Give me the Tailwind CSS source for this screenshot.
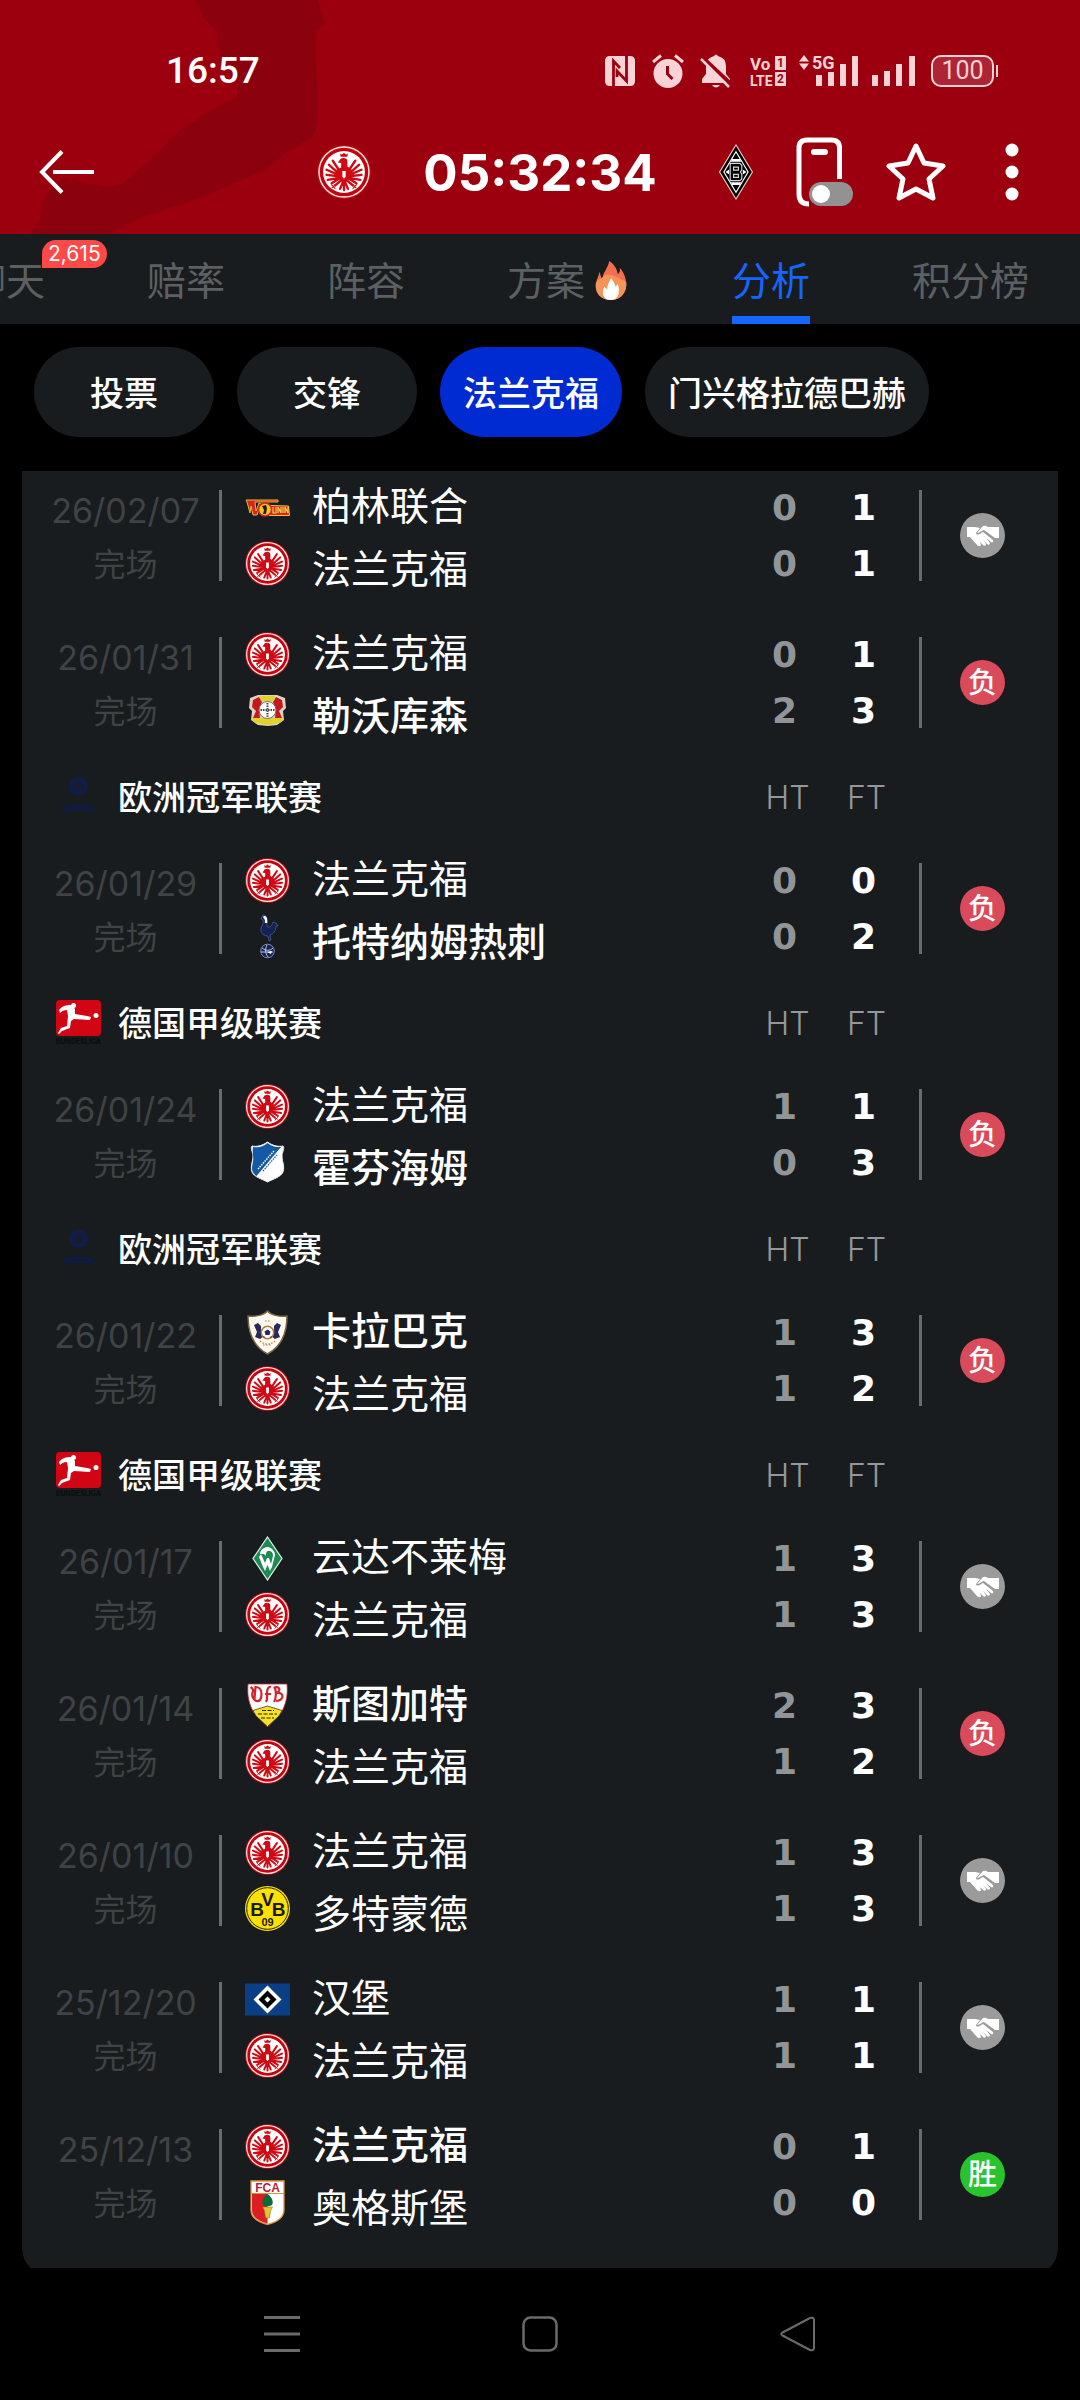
<!DOCTYPE html>
<html lang="zh-CN">
  <head>
    <meta charset="UTF-8" />
    <meta name="viewport" content="width=device-width, initial-scale=1.0" />
    <title>法兰克福 - 分析</title>
    <script src="https://cdn.jsdelivr.net/npm/@tailwindcss/browser@4"></script>
  </head>
  <body class="flex min-h-screen flex-col overflow-x-hidden bg-black font-['Inter','Noto_Sans_CJK_SC',sans-serif] text-white">
    <!-- Club and league logos -->
    <svg class="hidden">
      <symbol id="sge" viewBox="0 0 48 48">
        <circle cx="24" cy="24" r="24" fill="#c20510" />
        <circle cx="24" cy="24" r="22.2" fill="none" stroke="#fbe9e4" stroke-width="1.3" />
        <circle cx="24" cy="24" r="18.6" fill="#fff" />
        <g fill="none" stroke="#cf0a14" stroke-linecap="round" stroke-width="2.1">
          <path d="M22 26 14 14M21 27 10.500 17.500M21 27.500 8.500 22M21 28 8.500 26.500M21 29 9.500 31M21 29 13 34" />
          <path d="M26 26 34 14M27 27 37.500 17.500M27 27.500 39.500 22M27 28 39.500 26.500M27 29 38.500 31M27 29 35 34" />
          <path d="M22 31 16 36M26 31 32 36M24 32V40M23 33 20.500 39M25 33 27.500 39" />
          <path stroke-width="1" d="M13 35.500 16 38.500M13.500 38 16 35.500M35 35.500 32 38.500M34.500 38 32 35.500" />
        </g>
        <path fill="#cf0a14" d="M20.500 7.500 22 8.500 24 7 26 8.500 27.500 7.500 27 10.500H21zM20 13.500C21 11 26.500 10.500 27 14V19L31 22 28 31 24 34 20 31 17 22 21.500 20V16L18.500 15.500z" />
        <path fill="#fff" d="M22.500 23h3v5l-1.500 2-1.500-2z" />
      </symbol>
      <symbol id="bmg" viewBox="0 0 36 58">
        <path fill="#000" stroke="#e9c9c6" stroke-width="1.2" d="M18 1 35 29 18 57 1 29z" />
        <path fill="none" stroke="#fff" stroke-width="1.2" d="M18 8 30.500 29 18 50 5.500 29z" />
        <path fill="#fff" d="M14 15.500h8l1.500 3h-11zM14 42.500h8l1.500-3h-11zM7 29l4-2.500v5zM29 29l-4-2.500v5z" />
        <path fill="none" stroke="#d7d7d7" stroke-width="1.200" d="M12 20h10l2 2v5l-1.500 2 1.500 2v5l-2 2H12zM15.500 24h5v3h-5zM15.500 31.500h5v3h-5z" />
      </symbol>
      <symbol id="union" viewBox="0 0 45 45">
        <path fill="#d8261c" stroke="#e9b93a" stroke-width="1" d="M1 15h32v2H10l1 9 3-8 2 1-4 11H8L6 21 5 28 2 17z" />
        <path fill="#d8261c" stroke="#ebc43c" stroke-width="1" d="M25 20.500 43.500 21 44.500 30.500H24z" />
        <path fill="none" stroke="#f4d24a" stroke-width="1.200" d="M28 22v6h3v-6M33 28v-6l3 6v-6M38 22v6M40 28v-6l3 6v-6" />
        <circle cx="20" cy="24.500" r="6.500" fill="#efc52e" stroke="#d8261c" stroke-width="1.500" />
        <path fill="#2e1b10" d="M17 21l4-1 1 3-1 6h-3l1-4z" />
      </symbol>
      <symbol id="b04" viewBox="0 0 45 45">
        <path fill="#d9d5c0" d="M5 10 13 7h19l8 3 1 10-3 3 1 9-7 5-9 1-10-1-7-5 1-9-3-3z" />
        <path fill="#c8171d" d="M8 12l6-3 3 5-3 8 1 8H8l3-7-4-4zM37 12l-6-3-3 5 3 8-1 8h7l-3-7 4-4z" />
        <path fill="#e3d22c" d="M15 8h15l-1 5H16zM6 30h33l-4 5-12 2-13-2z" />
        <circle cx="22.500" cy="22" r="8.500" fill="#fff" stroke="#6d6a60" />
        <path fill="none" stroke="#444" stroke-width="2" stroke-dasharray="1.500 1" d="M15.500 22h14M22.500 15v14" />
      </symbol>
      <symbol id="thfc" viewBox="0 0 45 45">
        <path fill="#132257" stroke="#4a5a92" stroke-width=".8" d="M18 1c3 0 4 2 4 5v6c2 3 5 0 6-4l3 1 2 3-2 0c0 5-3 8-6 9l1 5-2 1-1-5c-4 0-8-3-7-8 1-3 3-4 2-8l-2-1z" />
        <path fill="#fff" d="M18.500 2c3-.5 4 2 3.800 7h-2.500c.5-3 0-4-1.500-5z" />
        <circle cx="22.500" cy="37" r="6.800" fill="#132257" stroke="#8c97bd" stroke-width=".9" />
        <path fill="none" stroke="#d5d9ea" stroke-width=".9" d="M17 34c4 3 8 3 11 0M16 38h12M22 31c-2 4-2 8 1 12" />
        <path fill="#fff" d="M22 38l5-1-1 3z" />
      </symbol>
      <symbol id="tsg" viewBox="0 0 45 45">
        <path fill="#fff" stroke="#e8eef5" d="M7 6c4 1 10 0 15.500-4C28 6 34 7 38 6c2 3-1 6-1 10 0 6 3 10 1 16-2 5-10 7-15.500 10C17 39 9 37 7 32c-2-6 1-10 1-16 0-4-3-7-1-10z" />
        <path fill="#1459a5" d="M8 7c5 1 10 0 14.500-4C27 6.500 32 7.500 36 7L11.500 36C6 32 6.500 28 8 22c1-6-1-10 0-15z" />
        <path fill="none" stroke="#fff" stroke-width="1.500" stroke-dasharray="1.500 1" d="M13 29 29 11" />
        <path fill="none" stroke="#1459a5" stroke-width="1.200" stroke-dasharray="1.500 1" d="M18 31 32 15" />
      </symbol>
      <symbol id="qar" viewBox="0 0 45 45">
        <path fill="#fdf9ef" stroke="#7b6444" stroke-width="1.500" d="M22.500 1C26 5 34 7 42 6c0 14-3 29-19.500 38C6 35 3 20 3 6c8 1 16-1 19.500-5z" />
        <path fill="#28285c" d="M9 15l4-2 3 3v6l3 4-4 3-5-2 2-5zM36 15l-4-2-3 3v6l-3 4 4 3 5-2-2-5z" />
        <circle cx="22.500" cy="22.500" r="6.200" fill="#fff" stroke="#b3803f" stroke-width="1.500" />
        <path fill="#28285c" d="M22.500 19.500l3 2-1 3.500h-4l-1-3.500zM18 26l2 1-1 1zM27 26l-2 1 1 1z" />
        <path fill="none" stroke="#b3803f" stroke-width="1.200" stroke-dasharray="1.500 1.500" d="M20 11h5M15 31c4 4 11 4 15 0M18 35h9" />
      </symbol>
      <symbol id="svw" viewBox="0 0 45 45">
        <path fill="#1d8a52" stroke="#e8f3ec" stroke-width="1.200" d="M22.500 1 37 22.500 22.500 44 8 22.500z" />
        <path fill="#fff" d="M15 18c0-4 4-7 8-7 4 1 7 4 7 8l-3 12-2 4-2.500-6-2.500 6-2-4-4-10 2-3 4 9 2-5h2l2 6 2-8c0-4-2-5-4-5-3 0-3 2-3 5l-2-2z" />
      </symbol>
      <symbol id="vfb" viewBox="0 0 45 45">
        <path fill="#fff" stroke="#c7262c" stroke-width=".8" d="M3 1h39c1 12-1 20-6 29L22.500 44 9 30C4 21 2 13 3 1z" />
        <path fill="#fbe122" stroke="#222" stroke-width=".7" d="M8 27.500 22.500 23 37 27.500 34 33 22.500 43.500 11 33z" />
        <path fill="none" stroke="#d3242b" stroke-width="2.200" d="M5.500 4c3 2 3 3 2 6s1 7 4 8 5-2 5-7-3-7-6-7l-1 12M21 19c2-3 1-7 1-10s2-6 4-5M20 11h6M29 4c3 3 2 12 0 15M29 5c4-3 8 2 3 5 7-1 8 7-1 8" />
        <path fill="none" stroke="#222" stroke-width="1.200" stroke-dasharray="4 1.500" d="M17 27.500h12M13 31h19M16 35h13" />
      </symbol>
      <symbol id="bvb" viewBox="0 0 45 45">
        <circle cx="22.500" cy="22.500" r="22.500" fill="#fde100" />
        <circle cx="22.500" cy="22.500" r="20.800" fill="none" stroke="#222" stroke-width="1" />
        <g fill="#1a1a1a" font-family="Liberation Sans" font-weight="700" text-anchor="middle">
          <text x="12" y="30" font-size="19">B</text>
          <text x="22.500" y="20" font-size="19">V</text>
          <text x="33.500" y="30" font-size="19">B</text>
          <text x="22.500" y="40" font-size="11">09</text>
        </g>
      </symbol>
      <symbol id="hsv" viewBox="0 0 45 45">
        <path fill="#0a3f86" d="M0 6.500h45v32H0z" />
        <path fill="#fff" d="M22.500 8.500 36.500 22.500 22.500 36.500 8.500 22.500z" />
        <path fill="#000" d="M22.500 13.500 31.500 22.500 22.500 31.500 13.500 22.500z" />
        <path fill="#fff" d="M22.500 19.500 25.500 22.500 22.500 25.500 19.500 22.500z" />
      </symbol>
      <symbol id="fca" viewBox="0 0 45 45">
        <path fill="#fff" stroke="#e0923a" stroke-width="1.300" d="M6 1h33v29c0 8-7 12-16.500 14.500C13 42 6 38 6 30z" />
        <path fill="#dd1d24" d="M7 14h15.500v29.500C13 41 7 37 7 30z" />
        <path stroke="#e0923a" d="M6 13.500h33" />
        <text x="22.500" y="11.500" fill="#b81f3c" font-family="Liberation Sans" font-size="12" font-weight="700" text-anchor="middle">FCA</text>
        <path fill="#0c6b3b" d="M22.500 14c3 2 6 6 5 10-1 3-9 3-10 0-1-4 2-8 5-10z" />
        <path fill="#e2c332" stroke="#84601a" stroke-width=".5" d="M17.500 27h10l-2 4-1 7h-4l-1-7z" />
      </symbol>
      <symbol id="ucl" viewBox="0 0 45 45">
        <g fill="#111d45">
          <circle cx="22.500" cy="13" r="9.500" />
          <path fill="#101b3e" d="M9 33c8-3 19-3 27 0l4 6c-11-2-24-2-35 0z" />
        </g>
        <path fill="#181c2c" d="M22.500 8l2 3h3l-2 3 1 4-4-2-4 2 1-4-2-3h3z" />
      </symbol>
      <symbol id="bl" viewBox="0 0 45 46">
        <rect width="45" height="36" y="1" fill="#d20515" rx="4" />
        <circle cx="17.500" cy="6.500" r="2.500" fill="#fff" />
        <circle cx="40" cy="16.500" r="2.500" fill="#fff" />
        <path fill="#fff" d="M3 11c3-4 7-5 12-5l4 4v5l12 2 4 1-1 3-16-1-3 2-1 7-8 3-3 3-1-1 3-5 6-2 1-10-1-6c-3 0-5 1-7 3z" />
        <text x="22.500" y="44.500" fill="#0c0e10" font-family="Inter" font-size="7" font-weight="800" text-anchor="middle">BUNDESLIGA</text>
      </symbol>
      <symbol id="shake" viewBox="0 0 32 22">
        <path fill="#fff" d="M0 2h8l5 1-4 5c0 2 3 2 5 0l2-1 10 8c1 2-1 3-2 2l-5-4 4 5c0 2-2 2-3 1l-4-4 3 4c0 2-2 2-3 1l-3-3 1 3c-1 2-3 1-4 0L3 12H0z" />
        <path fill="#fff" d="M10 8l5-6c2-2 4-1 6 0l6 0h5v11h-4l-11-8c-2 0-4 3-7 3z" />
      </symbol>
    </svg>

    <header class="relative bg-[#9c000f]">
      <svg class="absolute top-0 left-0 h-full w-[330px]" viewBox="0 0 330 234" aria-hidden="true">
        <path fill="#8b020e" d="M195 0 205 20 217 32 222 62 237 75V98L215 108 180 130 150 160 122 184 108 187 62 178 45 195 40 220 30 234H110L135 220 200 198 265 170 290 150 313 137 318 120 315 30 325 25 318 0z" />
      </svg>

      <!-- Status bar -->
      <div class="relative flex h-[137px] items-center pt-1 pr-[82px] pl-[166px]">
        <span class="font-[Roboto] text-[37px] font-medium">16:57</span>
        <div class="ml-auto flex items-center text-[#f9d3d6]">
          <svg class="h-[30px] w-[30px]" viewBox="0 0 30 30">
            <path fill="currentColor" d="M5 0h20q5 0 5 5v20q0 5-5 5H5q-5 0-5-5V5q0-5 5-5z" />
            <path fill="none" stroke="#9c000f" stroke-width="2.800" d="M8.500 30V5L15 12M21.500 0V25L12 15V21" />
          </svg>
          <svg class="ml-[17px] h-[34px] w-8" viewBox="0 0 32 34">
            <circle cx="16" cy="19.500" r="14.500" fill="currentColor" />
            <path stroke="currentColor" stroke-width="3" d="M1 8 9 1.500M31 8 23 1.500" />
            <path fill="none" stroke="#9c000f" stroke-width="3" d="M15.500 12v8l5 5" />
          </svg>
          <svg class="ml-4 h-[34px] w-8" viewBox="0 0 32 34">
            <path fill="currentColor" d="M14 2q2-3 4 0 8 2 8 10v8l4 5v4H2v-4l4-5v-8Q6 4 14 2zM12 31h8q-4 5-8 0z" />
            <path stroke="#9c000f" stroke-width="4" d="M3 4 33 32" />
            <path stroke="currentColor" stroke-width="2.500" d="M1 5 29 33" />
          </svg>
          <svg class="ml-[18px] h-[42px] w-9 overflow-visible" viewBox="0 -6 36 42" fill="currentColor" font-family="Roboto" font-weight="700">
            <text y="14" font-size="17">Vo</text>
            <text y="30" font-size="14">LTE</text>
            <path d="M25 0h11v14H25zM25 16h11v14H25z" />
            <text x="27" y="11" fill="#9c000f" font-size="12">1</text>
            <text x="27" y="27" fill="#9c000f" font-size="12">2</text>
          </svg>
          <svg class="ml-[13px] h-[42px] w-[60px] overflow-visible" viewBox="0 -4 60 42" fill="currentColor">
            <path d="M0 7.500 5 1l5 6.500zM0 9.500 5 16l5-6.500z" />
            <text x="13" y="15" font-family="Roboto" font-size="18" font-weight="700">5G</text>
            <path d="M17 21h6v11h-6zM29 18h6v14h-6zM41 10h6v22h-6zM53 2h6v30h-6z" />
          </svg>
          <svg class="ml-[13px] h-[34px] w-[43px]" viewBox="0 0 43 34" fill="currentColor">
            <path d="M0 21h6v11H0zM12 17h6v15h-6zM24 10h6v22h-6zM37 2h6v30h-6z" />
          </svg>
          <div class="ml-4 flex h-8 w-[63px] items-center justify-center rounded-[10px] border-2 border-current bg-[#ad2534] font-[Roboto] text-[25px] leading-none">100</div>
          <span class="ml-0.5 h-3 w-0.5 bg-current"></span>
        </div>
      </div>

      <!-- Match bar -->
      <div class="relative grid h-[97px] grid-cols-[1fr_auto_1fr] items-center pb-[27px]">
        <button class="ml-[39px] w-14" aria-label="返回">
          <svg class="h-11 w-14" viewBox="0 0 56 44" fill="none" stroke="#fff" stroke-width="4">
            <path d="M23 1.500 3 22 23 42.500M14 22h41" />
          </svg>
        </button>
        <div class="flex items-center gap-[53px]">
          <svg class="h-[54px] w-[54px]"><use href="#sge" /></svg>
          <span class="flex w-[232px] justify-center text-[51px] leading-none font-bold">05:32:34</span>
          <svg class="h-14 w-[54px]"><use href="#bmg" /></svg>
        </div>
        <div class="flex items-center justify-end pr-[61px]">
          <button aria-label="悬浮窗">
            <svg class="h-[70px] w-[58px]" viewBox="0 0 58 70">
              <path fill="none" stroke="#fff" stroke-width="5" d="M43.500 42V11q0-8-8-8H11q-8 0-8 8v46q0 10 10 10" />
              <rect x="15" y="12" width="17" height="6" fill="#fff" rx="3" />
              <rect x="13" y="45" width="44" height="24" fill="#929292" rx="12" />
              <circle cx="25" cy="57" r="9" fill="#fff" />
            </svg>
          </button>
          <button class="ml-8" aria-label="收藏">
            <svg class="h-[60px] w-[60px]" viewBox="0 0 60 60">
              <path fill="none" stroke="#fff" stroke-linejoin="round" stroke-width="5" d="M30 4 38 21 57 24 43 37 47 56 30 47 13 56 17 37 3 24 22 21z" />
            </svg>
          </button>
          <button class="ml-[59px]" aria-label="更多">
            <svg class="h-[58px] w-3.5" viewBox="0 0 14 58" fill="#fff">
              <circle cx="7" cy="7" r="6.500" /><circle cx="7" cy="29" r="6.500" /><circle cx="7" cy="51" r="6.500" />
            </svg>
          </button>
        </div>
      </div>
    </header>

    <nav class="h-[90px] overflow-hidden bg-[#181c1e]">
      <div class="-ml-[33px] flex h-full gap-[102px] text-[39px] whitespace-nowrap text-[#5c6062]">
        <a href="#" class="relative flex items-center pt-1">聊天
          <span class="absolute top-1.5 left-[75px] flex h-7 items-center rounded-full rounded-bl-none bg-[#ff4848] px-1.5 text-[21px] text-white">2,615</span>
        </a>
        <a href="#" class="flex items-center pt-1">赔率</a>
        <a href="#" class="flex items-center pt-1">阵容</a>
        <a href="#" class="flex items-center pt-1">方案
          <svg class="ml-2 h-10 w-[37px]" viewBox="0 0 37 42">
            <path fill="#f2704f" d="M16 0c5 3 9 9 9 14 2-2 3-4 2-7 5 5 7 12 7 18 0 10-7 16-16 16S2 35 2 26c0-6 3-9 4-15 1 3 1 6 3 8C9 12 15 8 16 0z" />
            <path fill="#f5945a" d="M2 24c2-5 5-4 8-8 6-4 13 0 24 6 1 9-5 19-16 19S1 34 2 24z" />
            <path fill="#fff" d="M18 18c4 5 4 7 5 9l2-3c3 9 1 17-7 17-9 0-10-8-7-14l3 3c0-5 2-8 4-12z" />
          </svg>
        </a>
        <a href="#" class="flex items-center border-b-8 border-[#1565ff] pt-3 text-[#1565ff]" aria-current="page">分析</a>
        <a href="#" class="flex items-center pt-1">积分榜</a>
      </div>
    </nav>

    <main class="flex-1 px-[22px]">
      <div class="flex gap-[23px] px-3 pt-[23px] pb-[34px] text-[34px] font-medium">
        <button class="h-[90px] min-w-[180px] rounded-full bg-[#181c1e] px-[23px] pt-0.5">投票</button>
        <button class="h-[90px] min-w-[180px] rounded-full bg-[#181c1e] px-[23px] pt-0.5">交锋</button>
        <button class="h-[90px] min-w-[180px] rounded-full bg-[#002bd2] px-[23px] pt-0.5">法兰克福</button>
        <button class="h-[90px] min-w-[180px] rounded-full bg-[#181c1e] px-[23px] pt-0.5">门兴格拉德巴赫</button>
      </div>

      <div class="-mb-2 overflow-hidden rounded-b-[28px] bg-[#181c1e] pb-7">
        <table class="-mt-[9px] w-full table-fixed">
          <colgroup>
            <col class="w-[200px]" />
            <col />
            <col class="w-[79px]" />
            <col class="w-[79px]" />
            <col class="w-[155px]" />
          </colgroup>
          <tbody id="matches"></tbody>
        </table>
      </div>
    </main>

    <footer class="relative flex h-[132px] items-center justify-center gap-[222px] bg-black">
      <button aria-label="最近任务">
        <svg class="h-9 w-9" viewBox="0 0 36 36" stroke="#6a6a6a" stroke-width="3"><path d="M0 1.500h36M0 18h36M0 34.500h36" /></svg>
      </button>
      <button aria-label="主页">
        <svg class="h-9 w-9" viewBox="0 0 36 36" fill="none" stroke="#6a6a6a" stroke-width="2.500"><rect x="1.500" y="1.500" width="33" height="33" rx="7" /></svg>
      </button>
      <button aria-label="返回">
        <svg class="h-9 w-9" viewBox="0 0 36 36" fill="none" stroke="#6a6a6a" stroke-linejoin="round" stroke-width="2"><path d="M2.500 16.500 30 2Q34 1 34 4V32Q34 35 30 34L2.500 19.500Q0 18 2.500 16.500z" /></svg>
      </button>
    </footer>

    <script>
      // home/away: [logo, name, half time, full time]
      const sge = (ht, ft) => ['sge', '法兰克福', ht, ft]
      const ucl = { league: '欧洲冠军联赛', logo: 'ucl' }
      const bl = { league: '德国甲级联赛', logo: 'bl' }
      const rows = [
        { date: '26/02/07', home: ['union', '柏林联合', 0, 1], away: sge(0, 1), result: '平' },
        { date: '26/01/31', home: sge(0, 1), away: ['b04', '勒沃库森', 2, 3], result: '负' },
        ucl,
        { date: '26/01/29', home: sge(0, 0), away: ['thfc', '托特纳姆热刺', 0, 2], result: '负' },
        bl,
        { date: '26/01/24', home: sge(1, 1), away: ['tsg', '霍芬海姆', 0, 3], result: '负' },
        ucl,
        { date: '26/01/22', home: ['qar', '卡拉巴克', 1, 3], away: sge(1, 2), result: '负' },
        bl,
        { date: '26/01/17', home: ['svw', '云达不莱梅', 1, 3], away: sge(1, 3), result: '平' },
        { date: '26/01/14', home: ['vfb', '斯图加特', 2, 3], away: sge(1, 2), result: '负' },
        { date: '26/01/10', home: sge(1, 3), away: ['bvb', '多特蒙德', 1, 3], result: '平' },
        { date: '25/12/20', home: ['hsv', '汉堡', 1, 1], away: sge(1, 1), result: '平' },
        { date: '25/12/13', home: sge(0, 1), away: ['fca', '奥格斯堡', 0, 0], result: '胜' },
      ]

      const badges = {
        平: '<span class="flex h-[45px] w-[45px] items-center justify-center rounded-full bg-[#9b9b9b]"><svg class="h-[22px] w-8" role="img" aria-label="平"><use href="#shake" /></svg></span>',
        负: '<span class="flex h-[45px] w-[45px] items-center justify-center rounded-full bg-[#d94a5a] text-[29px] leading-none font-medium">负</span>',
        胜: '<span class="flex h-[45px] w-[45px] items-center justify-center rounded-full bg-[#28c32d] text-[29px] leading-none font-medium">胜</span>',
      }

      const leagueRow = (r) => `
        <tr class="h-[79px]">
          <th colspan="2" class="text-left">
            <div class="flex items-center gap-[17px] pl-[34px] text-[34px] leading-none font-medium">
              <svg class="h-[46px] w-[45px]"><use href="#${r.logo}" /></svg><span class="pt-1">${r.league}</span>
            </div>
          </th>
          <th class="pt-1 pl-1.5 text-[32px] font-light text-[#95989a]">HT</th>
          <th class="pt-1 pl-1.5 text-[32px] font-light text-[#95989a]">FT</th>
          <td></td>
        </tr>`

      // the winner's name is heavier
      const weight = (a, b) => (a[3] > b[3] ? 'font-medium' : 'font-normal')

      const matchRow = ({ date, home, away, result }) => `
        <tr class="h-[147px]">
          <td>
            <div class="flex h-[91px] items-center border-r-3 border-[#696c6e] text-[#3f4345]">
              <div class="w-full pt-1 pl-2.5 text-center leading-[54px]">
                <div class="text-[34px]">${date}</div>
                <div class="text-[32px]">完场</div>
              </div>
            </div>
          </td>
          <td>
            <div class="flex items-center gap-[22px] pl-[23px]">
              <div class="flex flex-col gap-[11px]">
                <svg class="h-[45px] w-[45px]"><use href="#${home[0]}" /></svg>
                <svg class="h-[45px] w-[45px]"><use href="#${away[0]}" /></svg>
              </div>
              <div class="pt-0.5 text-[39px] leading-[63px] whitespace-nowrap">
                <div class="${weight(home, away)}">${home[1]}</div>
                <div class="${weight(away, home)}">${away[1]}</div>
              </div>
            </div>
          </td>
          <td class="text-center font-['DejaVu_Sans',sans-serif] text-[36px] leading-[56px] font-bold text-[#929597]"><div>${home[2]}</div><div>${away[2]}</div></td>
          <td class="text-center font-['DejaVu_Sans',sans-serif] text-[36px] leading-[56px] font-bold"><div>${home[3]}</div><div>${away[3]}</div></td>
          <td>
            <div class="ml-4 flex h-[91px] items-center justify-center border-l-3 border-[#696c6e] pr-[15px]">${badges[result]}</div>
          </td>
        </tr>`

      document.querySelector('#matches').innerHTML = rows
        .map((r) => (r.league ? leagueRow(r) : matchRow(r)))
        .join('')
    </script>
  </body>
</html>
